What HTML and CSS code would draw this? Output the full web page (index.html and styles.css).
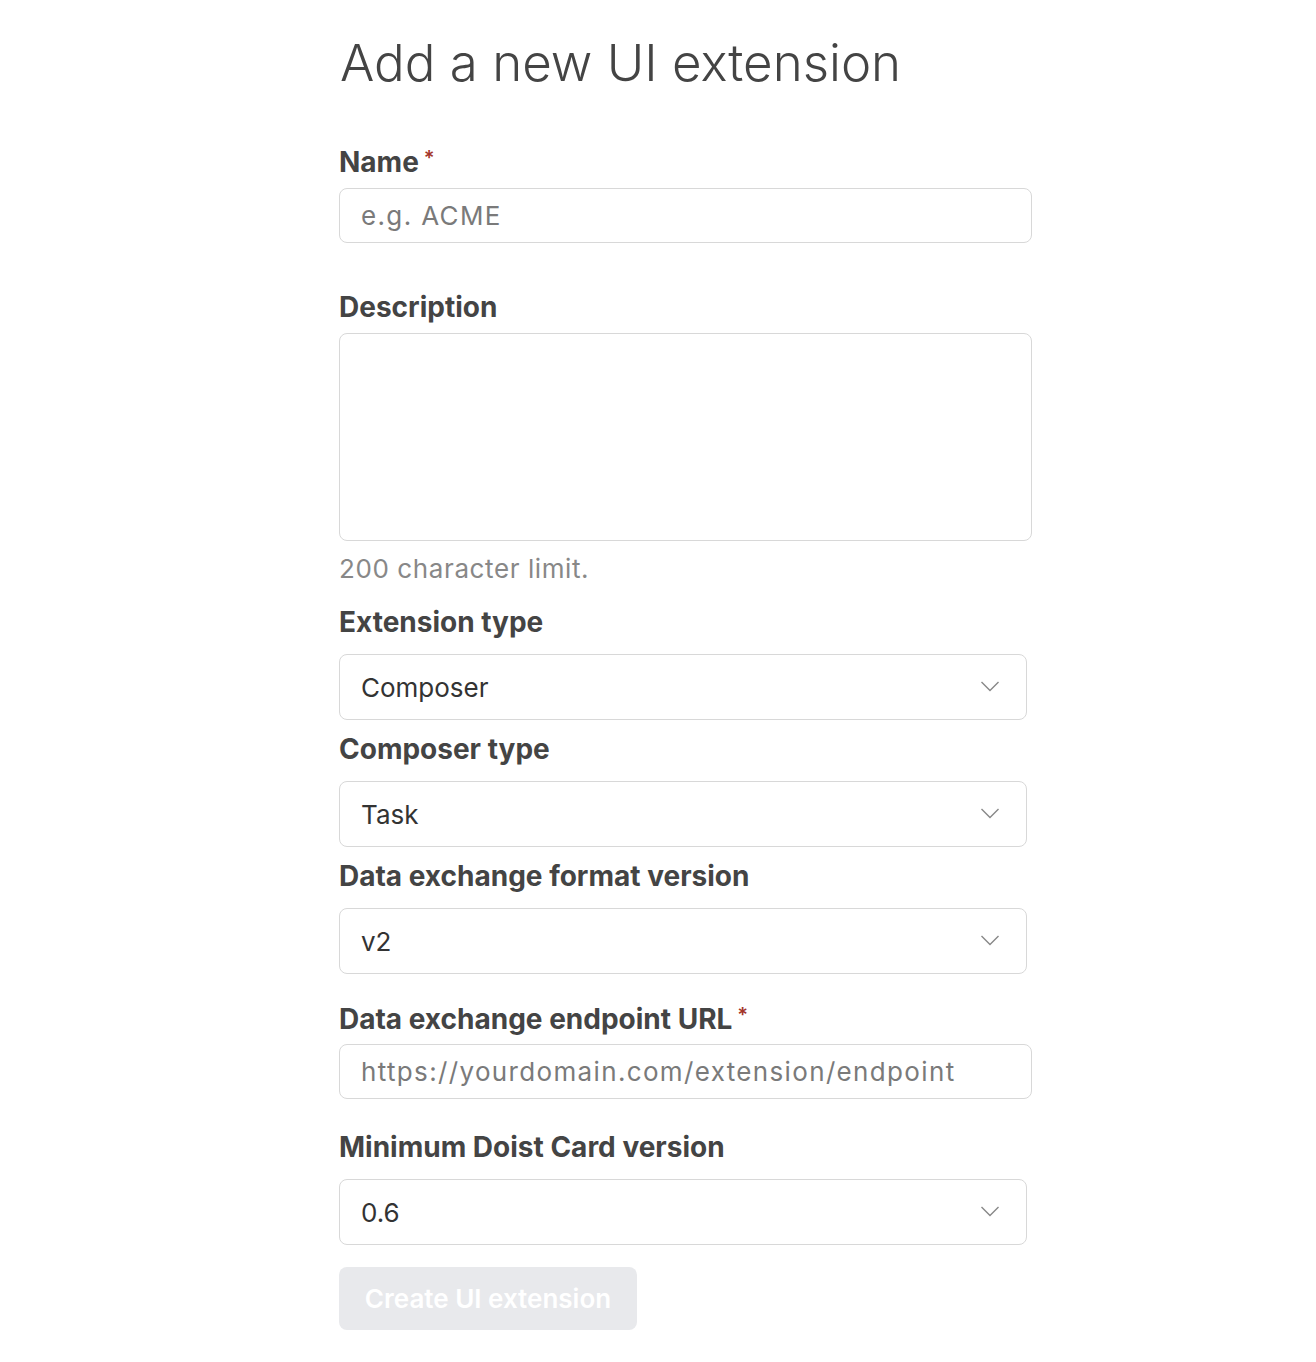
FILE: index.html
```html
<!DOCTYPE html>
<html lang="en">
<head>
<meta charset="utf-8">
<title>Add a new UI extension</title>
<link rel="stylesheet" href="styles.css">
</head>
<body>
<main class="page">
  <h1 class="title">Add a new UI extension</h1>
  <form class="form">
    <div class="field field-name">
      <label class="label">Name<span class="req">*</span></label>
      <div class="input placeholder">e.g. ACME</div>
    </div>
    <div class="field field-desc">
      <label class="label">Description</label>
      <div class="textarea"></div>
      <p class="help">200 character limit.</p>
    </div>
    <div class="field select-field">
      <label class="label">Extension type</label>
      <div class="select"><span>Composer</span><svg class="chev" viewBox="0 0 20 12" width="20" height="12"><path d="M1.5 2 10 10.5 18.5 2" fill="none" stroke="#888" stroke-width="1.4"/></svg></div>
    </div>
    <div class="field select-field">
      <label class="label">Composer type</label>
      <div class="select"><span>Task</span><svg class="chev" viewBox="0 0 20 12" width="20" height="12"><path d="M1.5 2 10 10.5 18.5 2" fill="none" stroke="#888" stroke-width="1.4"/></svg></div>
    </div>
    <div class="field select-field field-format">
      <label class="label">Data exchange format version</label>
      <div class="select"><span>v2</span><svg class="chev" viewBox="0 0 20 12" width="20" height="12"><path d="M1.5 2 10 10.5 18.5 2" fill="none" stroke="#888" stroke-width="1.4"/></svg></div>
    </div>
    <div class="field field-url">
      <label class="label">Data exchange endpoint URL<span class="req">*</span></label>
      <div class="input placeholder">https://yourdomain.com/extension/endpoint</div>
    </div>
    <div class="field select-field field-min">
      <label class="label">Minimum Doist Card version</label>
      <div class="select"><span>0.6</span><svg class="chev" viewBox="0 0 20 12" width="20" height="12"><path d="M1.5 2 10 10.5 18.5 2" fill="none" stroke="#888" stroke-width="1.4"/></svg></div>
    </div>
    <button type="button" class="btn">Create UI extension</button>
  </form>
</main>
</body>
</html>
```
FILE: styles.css
```css
* { box-sizing: border-box; }
html, body { margin: 0; padding: 0; background: #fff; }
body {
  font-family: Inter, "Noto Sans", sans-serif;
  color: #333;
}
.page {
  padding: 28px 0 0 339px;
  width: 1032px;
}
.title {
  margin: 0 0 48px 1px;
  font-size: 51px;
  line-height: 70px;
  font-weight: 300;
  color: #444;
}
.form { display: flex; flex-direction: column; }
.field { display: flex; flex-direction: column; }
.label {
  display: block;
  font-size: 28px;
  line-height: 32px;
  font-weight: 700;
  color: #444;
  margin: 0 0 10px 0;
}
.req {
  color: #a3352a;
  font-size: 20px;
  vertical-align: top;
  position: relative;
  top: -4px;
  margin-left: 5px;
  font-weight: 600;
}
.input {
  height: 55px;
  width: 693px;
  border: 1.5px solid #d8d8d8;
  border-radius: 8px;
  padding: 0 21px;
  display: flex;
  align-items: center;
  font-size: 26px;
}
.placeholder { color: #7a7a7a; letter-spacing: 1.35px; }
.field-name { margin-bottom: 48px; }
.textarea {
  height: 208px;
  width: 693px;
  border: 1.5px solid #d8d8d8;
  border-radius: 8px;
}
.help {
  margin: 12px 0 0 0;
  font-size: 26px;
  line-height: 32px;
  color: #888;
  letter-spacing: 0.6px;
}
.field-desc { margin-bottom: 21px; }
.select-field .label { margin-bottom: 16px; }
.select {
  height: 66px;
  width: 688px;
  border: 1.5px solid #d8d8d8;
  border-radius: 8px;
  padding: 0 26px 0 21px;
  display: flex;
  align-items: center;
  justify-content: space-between;
  font-size: 26px;
  color: #333;
  margin-bottom: 13px;
}
.chev { display: block; margin-top: -2px; }
.field-format { margin-bottom: 13px; }
.field-format .select { margin-bottom: 16px; }
.field-url .label { margin-bottom: 9px; }
.field-url { margin-bottom: 32px; }
.field-min .select { margin-bottom: 22px; }
.btn {
  align-self: flex-start;
  width: 298px;
  height: 63px;
  border: 0;
  border-radius: 8px;
  background: #e8e9ec;
  color: #fff;
  font-family: inherit;
  font-size: 26px;
  font-weight: 600;
  padding: 0;
}
```
